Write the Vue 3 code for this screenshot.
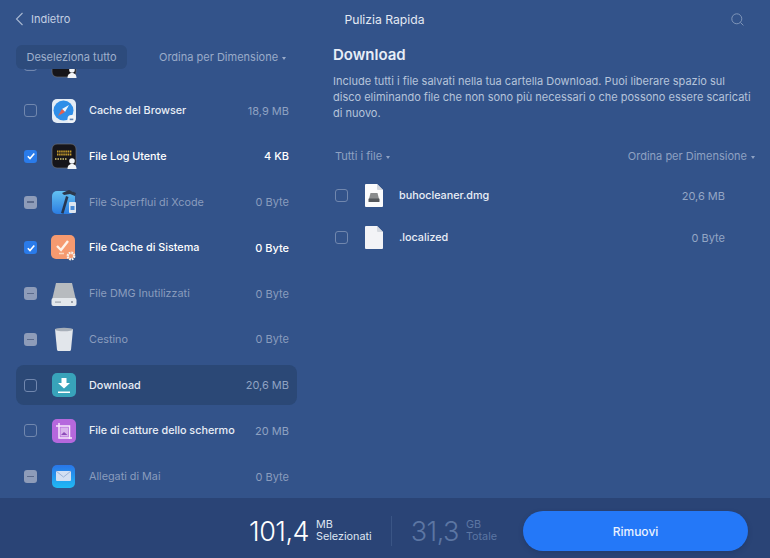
<script setup>
const rows = [
  { icon: 'log', name: '', size: '', state: 'off', mode: 'hidden' },
  { icon: 'safari', name: 'Cache del Browser', size: '18,9 MB', state: 'off', mode: 'normal' },
  { icon: 'log', name: 'File Log Utente', size: '4 KB', state: 'on', mode: 'strong' },
  { icon: 'xcode', name: 'File Superflui di Xcode', size: '0 Byte', state: 'mixed', mode: 'dim' },
  { icon: 'cache', name: 'File Cache di Sistema', size: '0 Byte', state: 'on', mode: 'strong' },
  { icon: 'disk', name: 'File DMG Inutilizzati', size: '0 Byte', state: 'mixed', mode: 'dim' },
  { icon: 'trash', name: 'Cestino', size: '0 Byte', state: 'mixed', mode: 'dim' },
  { icon: 'download', name: 'Download', size: '20,6 MB', state: 'off', mode: 'active' },
  { icon: 'shot', name: 'File di catture dello schermo', size: '20 MB', state: 'off', mode: 'normal' },
  { icon: 'mail', name: 'Allegati di Mai', size: '0 Byte', state: 'mixed', mode: 'dim' }
]
const files = [
  { name: 'buhocleaner.dmg', size: '20,6 MB', dmg: true },
  { name: '.localized', size: '0 Byte', dmg: false }
]
</script>

<template>
  <div class="app">
    <header class="top">
      <div class="back">
        <svg width="9" height="14" viewBox="0 0 9 14"><path d="M7.500 1 1.500 7l6 6" fill="none" stroke="#a9b8d2" stroke-width="1.100" /></svg>
        <span>Indietro</span>
      </div>
      <div class="title">Pulizia Rapida</div>
      <svg class="search" width="13" height="13" viewBox="0 0 13 13"><circle cx="5.800" cy="5.800" r="5" fill="none" stroke="#7f95b8" stroke-width="1" /><path d="m9.400 9.400 3 3" stroke="#7f95b8" stroke-width="1" /></svg>
    </header>

    <main class="body">
      <section class="left">
        <div class="tools">
          <button class="deselect">Deseleziona tutto</button>
          <div class="sort">Ordina per Dimensione <i class="dot"></i></div>
        </div>
        <div class="list">
          <div class="list-inner">
            <div v-for="(r, i) in rows" :key="i" class="row" :class="r.mode">
              <span class="check" :class="r.state">
                <svg v-if="r.state === 'on'" width="10" height="10" viewBox="0 0 10 10"><path d="m1.800 5.200 2.200 2.300 4.300-5" fill="none" stroke="#fff" stroke-width="1.600" /></svg>
              </span>
              <svg class="icon" width="26" height="26" viewBox="0 0 26 26">
                <defs>
                  <linearGradient id="mailg" x1="0" y1="0" x2="0" y2="1"><stop offset="0" stop-color="#2a78ee" /><stop offset="1" stop-color="#1fc0fb" /></linearGradient>
                  <linearGradient id="xg" x1="0" y1="0" x2="0" y2="1"><stop offset="0" stop-color="#66c8f9" /><stop offset="1" stop-color="#2b7fe6" /></linearGradient>
                </defs>
                <template v-if="r.icon === 'safari'">
                  <rect x="1" y="1" width="24" height="24" rx="5" fill="#e4ecf5" />
                  <circle cx="12.500" cy="12.500" r="10" fill="#2f8ee8" />
                  <path d="m18 7-7 4 3 3z" fill="#f3f6fb" /><path d="m7 18 4-7 3 3z" fill="#e4614f" />
                  <circle cx="20.500" cy="21" r="4" fill="#f1f4f8" /><path d="M18.700 22.200h3.600v-1.600h-3.600z" fill="#5a7fb0" />
                </template>
                <template v-else-if="r.icon === 'log'">
                  <rect x="1" y="1" width="24" height="24" rx="5" fill="#16151a" stroke="#6b6d73" stroke-width=".7" />
                  <path d="M6 8.500h15M6 11.500h15" stroke="#c69c2c" stroke-width="1.800" stroke-dasharray="1.500 .6" />
                  <path d="M4 16h12" stroke="#a89c5c" stroke-width="1.800" stroke-dasharray="1.500 1" />
                  <circle cx="21" cy="18" r="2.800" fill="#f2f4f7" /><path d="M16.500 26c0-3.600 2-5 4.500-5s4.500 1.400 4.500 5z" fill="#f2f4f7" />
                </template>
                <template v-else-if="r.icon === 'xcode'">
                  <rect x="1" y="2" width="23" height="23" rx="5" fill="url(#xg)" />
                  <path d="m15 7-5 17 2.500.8L17.500 8z" fill="#27364f" />
                  <path d="m11 4 7-3 7 3-1 3-5-2-6 1z" fill="#2c3648" />
                  <rect x="18" y="13" width="7" height="11" rx="1" fill="#e8eef6" /><rect x="19.500" y="17" width="4" height="4" fill="#4b8fdb" />
                </template>
                <template v-else-if="r.icon === 'cache'">
                  <rect x="0" y="0" width="24" height="24" rx="5" fill="#f69a70" />
                  <path d="m6 11 4 4 7-9" fill="none" stroke="#fdf3ea" stroke-width="2.400" />
                  <path d="M8 18.500h5" stroke="#fbd8c0" stroke-width="1.500" />
                  <circle cx="20" cy="21" r="3.200" fill="none" stroke="#f6f2ec" stroke-width="2.400" stroke-dasharray="1.700 .8" />
                </template>
                <template v-else-if="r.icon === 'disk'">
                  <path d="M5 2h16l4 17H1z" fill="#bfc1c2" />
                  <rect x="0.500" y="17" width="25" height="8" rx="2" fill="#eef0f2" />
                  <circle cx="21" cy="21" r="1" fill="#8a8f96" /><path d="M4 20.500h6v1.200H4z" fill="#a3a8af" />
                </template>
                <template v-else-if="r.icon === 'trash'">
                  <path d="M3 3h20l-2.200 20.500c-.2 1-1 1.500-2 1.500H7.200c-1 0-1.800-.5-2-1.500z" fill="#eceef1" transform="translate(1.300 0) scale(.9 1)" />
                  <ellipse cx="13" cy="3.500" rx="9" ry="1.800" fill="#aeb4bc" />
                </template>
                <template v-else-if="r.icon === 'download'">
                  <rect x="1" y="1" width="24" height="24" rx="5" fill="#38a3ba" />
                  <path d="M10.500 6h5v5h3.500L13 16.500 7 11h3.500z" fill="#fff" /><path d="M7 19.500h12V21H7z" fill="#fff" />
                </template>
                <template v-else-if="r.icon === 'shot'">
                  <rect x="1" y="1" width="24" height="24" rx="5" fill="#b568dd" />
                  <path d="M8 5v15h13" fill="none" stroke="#f6e8fb" stroke-width="1.500" />
                  <path d="M5 8h13.500v13" fill="none" stroke="#f6e8fb" stroke-width="1.500" />
                  <rect x="9.500" y="9.500" width="7.500" height="9" fill="#d9b4ec" /><path d="m10 17 3-3 3.500 3z" fill="#8e4bb8" />
                </template>
                <template v-else>
                  <rect x="1" y="1" width="23" height="23" rx="5" fill="url(#mailg)" />
                  <rect x="5" y="7" width="15" height="10" rx="1" fill="#dbe7f8" />
                  <path d="m5 7 7.500 6L20 7" fill="none" stroke="#9fb9dd" stroke-width="1" />
                </template>
              </svg>
              <span class="name">{{ r.name }}</span>
              <span class="size">{{ r.size }}</span>
            </div>
          </div>
        </div>
      </section>

      <section class="right">
        <h1>Download</h1>
        <p>Include tutti i file salvati nella tua cartella Download. Puoi liberare spazio sul<br>disco eliminando file che non sono più necessari o che possono essere scaricati<br>di nuovo.</p>
        <div class="filters">
          <span>Tutti i file <i class="dot"></i></span>
          <span>Ordina per Dimensione <i class="dot"></i></span>
        </div>
        <div class="files">
          <div v-for="f in files" :key="f.name" class="file">
            <span class="check off"></span>
            <svg class="doc" width="18" height="23" viewBox="0 0 18 23">
              <path d="M1 0h11l6 6v16a1 1 0 0 1-1 1H1a1 1 0 0 1-1-1V1a1 1 0 0 1 1-1z" :fill="f.dmg ? '#fbfbfc' : '#f3f3f6'" />
              <path d="M12 0l6 6h-5a1 1 0 0 1-1-1z" fill="#d5d8de" />
              <template v-if="f.dmg">
                <path d="M5.500 9h7l1.500 6H4z" fill="#8a8c8d" /><rect x="3.500" y="14.500" width="11" height="3.500" rx=".6" fill="#55585c" />
              </template>
            </svg>
            <span class="fname">{{ f.name }}</span>
            <span class="fsize">{{ f.size }}</span>
          </div>
        </div>
      </section>
    </main>

    <footer class="foot">
      <div class="stat">
        <span class="num">101,4</span>
        <span class="unit"><b>MB</b><b>Selezionati</b></span>
      </div>
      <div class="sep"></div>
      <div class="stat muted">
        <span class="num">31,3</span>
        <span class="unit"><b>GB</b><b>Totale</b></span>
      </div>
      <button class="remove">Rimuovi</button>
    </footer>
  </div>
</template>

<style>
html, body { margin: 0; background: #33538a; }
</style>

<style scoped>
.app {
  width: 770px;
  height: 558px;
  display: flex;
  flex-direction: column;
  overflow: hidden;
  background: #33538a;
  font-family: Inter, "Liberation Sans", sans-serif;
  color: #fff;
}
.top {
  height: 38px;
  flex: none;
  display: grid;
  grid-template-columns: 1fr auto 1fr;
  align-items: center;
  padding: 0 16px 0 15px;
}
.back {
  display: flex;
  align-items: center;
  gap: 7px;
  font-size: 11px;
  color: #c3cfe2;
}
.title {
  font-size: 12.200px;
  color: #e3e9f3;
}
.search {
  justify-self: end;
  margin-right: 10px;
}
.body {
  flex: 1;
  min-height: 0;
  display: flex;
}
.left {
  width: 313px;
  flex: none;
  display: flex;
  flex-direction: column;
  padding: 7px 16px 0;
  box-sizing: border-box;
}
.tools {
  display: flex;
  align-items: center;
  height: 24px;
  flex: none;
}
.deselect {
  width: 111px;
  height: 24px;
  border: 0;
  border-radius: 6px;
  background: #2d4b7c;
  color: #9fb0cc;
  font: inherit;
  font-size: 11px;
  padding: 0;
}
.sort {
  margin-left: 32px;
  font-size: 11px;
  color: #9aabc9;
  white-space: nowrap;
}
.dot {
  display: inline-block;
  width: 0;
  height: 0;
  border-left: 2px solid transparent;
  border-right: 2px solid transparent;
  border-top: 3px solid currentColor;
  vertical-align: 1px;
  margin-left: 1px;
}
.list {
  flex: 1;
  min-height: 0;
  overflow: hidden;
}
.list-inner {
  margin-top: -24px;
  display: flex;
  flex-direction: column;
  gap: 6px;
}
.row {
  height: 39.750px;
  flex: none;
  display: flex;
  align-items: center;
  padding: 0 8px;
  border-radius: 8px;
  box-sizing: border-box;
  font-size: 10.800px;
}
.row.active { background: #2b4876; }
.check {
  width: 13px;
  height: 13px;
  flex: none;
  box-sizing: border-box;
  border-radius: 3px;
  display: flex;
  align-items: center;
  justify-content: center;
}
.check.off { border: 1px solid #7187ae; }
.check.on { background: #2a7bea; }
.check.mixed { background: #8e9cb9; }
.check.mixed::after {
  content: "";
  width: 7px;
  height: 1.500px;
  background: #5b6a8b;
}
.icon {
  margin-left: 14px;
  flex: none;
}
.name {
  margin-left: 12px;
  flex: 1;
  white-space: nowrap;
  font-weight: 500;
  color: #e9eef6;
}
.size {
  font-size: 11px;
  color: #8fa2c2;
  white-space: nowrap;
}
.row.strong .name { color: #fff; }
.row.strong .size { color: #fff; font-weight: 500; }
.row.dim .name { color: #8a9cbd; font-weight: 400; }
.row.dim .size { color: #8a9cbd; }
.row.dim .icon { opacity: .95; }
.row.active .size { color: #90a3c3; }
.right {
  flex: 1;
  min-width: 0;
  padding: 7px 15px 0 20px;
}
h1 {
  margin: 0;
  font-size: 15px;
  line-height: 19px;
  font-weight: 600;
  color: #e8eef7;
}
p {
  margin: 9px 0 0;
  font-size: 11px;
  line-height: 16px;
  white-space: nowrap;
  color: #b6c4da;
}
.filters {
  margin-top: 28px;
  padding: 0 0 0 2px;
  display: flex;
  justify-content: space-between;
  font-size: 11px;
  color: #8ea1c2;
}
.files {
  margin-top: 20px;
  display: flex;
  flex-direction: column;
  gap: 17px;
}
.file {
  height: 25px;
  display: flex;
  align-items: center;
  padding: 0 30px 0 2px;
  font-size: 10.800px;
}
.doc {
  margin-left: 17px;
  flex: none;
}
.fname {
  margin-left: 16px;
  flex: 1;
  font-weight: 500;
  color: #e9eef6;
}
.fsize { font-size: 11px; color: #93a6c5; }
.foot {
  height: 60px;
  flex: none;
  background: #2a4476;
  display: flex;
  align-items: center;
  padding: 6px 22px 0 249px;
  box-sizing: border-box;
}
.stat {
  display: flex;
  align-items: center;
  gap: 7px;
}
.num {
  font-size: 27px;
  font-weight: 300;
  letter-spacing: -.5px;
}
.unit {
  display: flex;
  flex-direction: column;
  font-size: 10.800px;
  line-height: 12px;
  color: #dfe6f1;
}
.unit b { font-weight: 400; }
.sep {
  width: 1px;
  height: 30px;
  background: #3a5585;
  margin: 0 19px 0 19px;
}
.muted { color: #5c76a3; }
.muted .unit { color: #5c76a3; }
.remove {
  margin-left: auto;
  width: 225px;
  height: 40px;
  border: 0;
  border-radius: 20px;
  background: #2478f8;
  color: #eaf2ff;
  font: inherit;
  font-size: 12px;
  font-weight: 500;
  box-shadow: 0 2px 5px rgba(20, 40, 80, .3);
}
</style>
